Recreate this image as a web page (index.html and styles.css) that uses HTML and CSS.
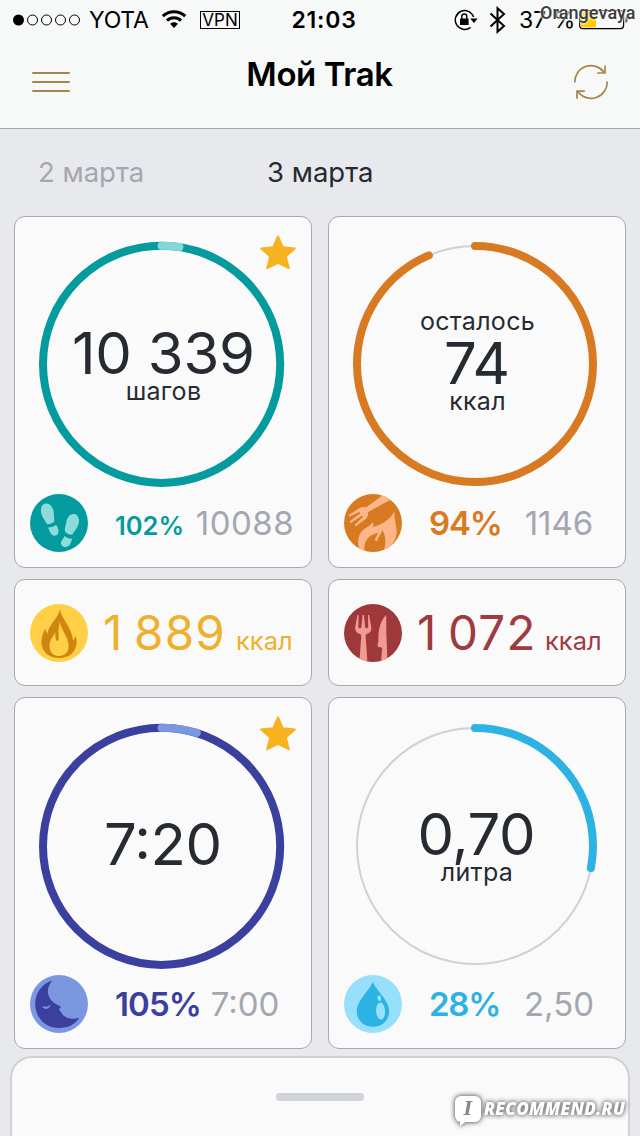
FILE: index.html
```html
<!DOCTYPE html>
<html lang="ru">
<head>
    <meta charset="UTF-8">
    <meta name="viewport" content="width=device-width, initial-scale=1.0">
    <title>Мой Trak</title>
    <link rel="stylesheet" href="styles.css">
</head>
<body>
    <header class="header">
        <div class="status">
            <div class="status-left">
                <svg class="signal" width="68" height="12" viewBox="0 0 68 12">
                    <circle cx="5.5" cy="6" r="5.5"/>
                    <g fill="none" stroke="#000" stroke-width="1">
                        <circle cx="19.5" cy="6" r="5"/>
                        <circle cx="33.5" cy="6" r="5"/>
                        <circle cx="47.5" cy="6" r="5"/>
                        <circle cx="61.5" cy="6" r="5"/>
                    </g>
                </svg>
                <span class="carrier">YOTA</span>
                <svg class="wifi" width="26" height="20" viewBox="0 0 26 20">
                    <g fill="none" stroke="#000" stroke-width="3">
                        <path d="M1.8 7.2C8 1.2 18 1.2 24.2 7.2"/>
                        <path d="M6 11.6C10 7.8 16 7.8 20 11.6"/>
                    </g>
                    <path d="M9 14.8C11.3 12.6 14.7 12.6 17 14.8L13 19Z"/>
                </svg>
                <span class="vpn">VPN</span>
            </div>
            <span class="clock">21:03</span>
            <div class="status-right">
                <svg class="lock" width="24" height="22" viewBox="0 0 24 22">
                    <path d="M19.6 8A9.4 9.4 0 1 0 16.5 18.4" fill="none" stroke="#000" stroke-width="1.4"/>
                    <path d="M16.2 9.5H23.6L20 14Z"/>
                    <rect x="6" y="9.5" width="8.6" height="6.5" rx=".6"/>
                    <path d="M7.8 10V7.6C7.8 4.2 12.8 4.2 12.8 7.6V10" fill="none" stroke="#000" stroke-width="1.4"/>
                </svg>
                <svg class="bluetooth" width="18" height="28" viewBox="0 0 18 28">
                    <path d="M1.5 7.5L15 20L8.5 25.8V2.2L15 8L1.5 20.5" fill="none" stroke="#000" stroke-width="2"/>
                </svg>
                <span class="charge">37 %</span>
                <svg class="battery" width="50" height="20" viewBox="0 0 50 20">
                    <rect x=".6" y=".6" width="44" height="18" rx="3" fill="none" stroke="#000" stroke-width="1.2"/>
                    <rect x="2" y="2" width="15" height="15.4" fill="#ffcc00"/>
                    <path d="M46.5 6.5C49.5 7 49.5 12.5 46.5 13Z" fill="#555"/>
                </svg>
            </div>
        </div>
        <div class="navbar">
            <button class="menu" aria-label="Меню"><i></i><i></i><i></i></button>
            <h1 class="title">Мой Trak</h1>
            <button class="refresh" aria-label="Обновить">
                <svg width="36" height="36" viewBox="0 0 36 36" fill="none" stroke="#a6854c" stroke-width="1.7">
                    <path d="M1.8 18.5A16.2 16.2 0 0 1 31 8.2"/>
                    <path d="M32 1.5V9H24.2"/>
                    <path d="M34.2 17.5A16.2 16.2 0 0 1 5 27.8"/>
                    <path d="M4 34.8V27.2H11.8"/>
                </svg>
            </button>
        </div>
    </header>

    <nav class="days">
        <span class="day">2 марта</span>
        <span class="day active">3 марта</span>
    </nav>

    <main class="cards">
        <section class="card steps">
            <svg class="ring" width="246" height="246" viewBox="0 0 246 246">
                <circle class="arc" cx="122.6" cy="123.3" r="118.6"/>
                <circle class="arc extra" cx="122.6" cy="123.3" r="118.6" pathLength="100" stroke-dasharray="2.4 100" transform="rotate(-90 122.6 123.3)"/>
                <text class="value" x="124.5" y="133" textLength="183">10 339</text>
                <text class="unit" x="124.5" y="159">шагов</text>
            </svg>
            <svg class="star" width="36" height="35" viewBox="0 0 36 35">
                <path d="M18 1.5L22.8 12.2L34.8 13.4L25.8 21.4L28.8 33.2L18 27.8L7.2 33.2L10.2 21.4L1.2 13.4L13.2 12.2Z"/>
            </svg>
            <div class="foot">
                <svg class="icon" viewBox="0 0 58 58">
                    <g fill="#8edcd9">
                        <path d="M11 17C10.8 12 13 9.3 16.5 9.5C20.8 9.7 24 14.5 23.8 20C23.7 23.5 24.6 25 24.2 27.5C22 29.8 19.5 30.6 16.8 30C15.5 26.5 11.2 23 11 17Z"/>
                        <path d="M17.8 33.5C20.8 33.7 23.5 32.8 26 30.8C28.4 34 29.8 38.8 27 41C24.4 42.8 21.3 41.4 20.3 38.6C19.6 36.6 18.6 35.4 17.8 33.5Z"/>
                        <path d="M49 27.5C49.2 22.5 46.8 19.8 43.4 20C39.4 20.2 36.8 24 36.2 28.5C35.8 32 34.4 34 35 37.5C37 40 39.8 41 42.4 40.7C43.8 37 48.7 33.5 49 27.5Z"/>
                        <path d="M42 44.8C39.2 44.6 36.6 43.8 34.6 42C33.6 44.5 31.5 45.8 31 48.4C30.6 51 32.8 53 35.6 53C40 52.8 41.2 48.4 42 44.8Z"/>
                    </g>
                </svg>
                <span class="percent">102%</span>
                <span class="target">10088</span>
            </div>
        </section>

        <section class="card balance">
            <svg class="ring" width="246" height="246" viewBox="0 0 246 246">
                <circle class="track" cx="122" cy="123" r="118"/>
                <circle class="arc" cx="122" cy="123" r="118" pathLength="100" stroke-dasharray="93.6 100" transform="rotate(-90 122 123)"/>
                <text class="unit" x="124.5" y="89">осталось</text>
                <text class="value" x="124" y="143" textLength="66">74</text>
                <text class="unit" x="124.5" y="169">ккал</text>
            </svg>
            <div class="foot">
                <svg class="icon" viewBox="0 0 58 58">
                    <g fill="#fdb68a">
                        <path d="M39 1L22 13.5C20 12.8 17.5 12.8 15.5 14L4.5 21.2L5.2 22.8L15.5 18L16.3 19.2L5.5 27.4L6.6 28.9L18.2 21.6L19 22.8L10.5 31L11.8 32.3L21.5 25.2C23.5 23.5 24.8 20.5 24 18L47 5.5Z"/>
                        <path d="M17 60C12.5 50 13.5 41 19 36C22.5 33 27 31.5 28.8 28C29.8 30 29.5 31.5 28.6 33C37 31 46 26 50.5 17.2C49.5 25 53.5 33 52.5 40C51.5 48 46 53 39 59C42 50 42.5 42.5 38.2 36C37.5 40 34.5 42 33.5 46.5C32.5 47.8 31 47.2 31 45.5C31.2 43.5 33.5 42 33.8 38.8C26 40.5 18 46.5 21 60Z"/>
                    </g>
                </svg>
                <span class="percent">94%</span>
                <span class="target">1146</span>
            </div>
        </section>

        <section class="card row burned">
            <svg class="icon" viewBox="0 0 58 58">
                <path fill="#cf8610" d="M30 5C30.5 14 42 23 43 36.2C44.6 35 45.2 33.5 45.3 31.5C47.3 36 47.4 42 44 47C40.5 52 35 54 29 54C22 54 15.8 51 12.9 45C10.5 39.5 11 32 15.5 24.5C15.8 26.5 16.2 28 17.5 29.5C19 20 28.5 14 30 5Z"/>
                <path fill="#ffcf45" d="M29.8 17C30.5 26 38.7 32 38.6 42.5C38.5 48.5 34.5 52 29 52C23 52 19.5 48 19.5 42C19.5 35 24 32.5 25.5 28C25.3 32 25.2 37 27.5 37C30 35.5 28.2 31 28.4 27C28.6 23 29.8 20.5 29.8 17Z"/>
            </svg>
            <span class="amount">1 889</span>
            <span class="kcal">ккал</span>
        </section>

        <section class="card row eaten">
            <svg class="icon" viewBox="0 0 58 58">
                <g fill="#f09a92">
                    <path d="M13.4 11L11.2 23.5C10.8 27.5 13.5 29.2 16.2 30C17.4 31 17.3 32 17.2 33L15.4 58H23.4L21.7 33C21.6 31.5 21.7 30.7 22.7 30C25.5 29 27.8 27.5 27.3 23.5L25.2 11H24L24.2 23C24 24.8 21.5 24.8 21.2 23L20 11H18.6L17.3 23C17 24.8 14.6 24.8 14.4 23L14.6 11Z"/>
                    <path d="M42.2 11C37 15.5 33.7 26 34.5 37C33.8 38.5 33.5 40 33.6 42.2C34.6 43.8 36.6 43.2 38.2 43.8L37 58H43.4L42.4 30Z"/>
                </g>
            </svg>
            <span class="amount">1 072</span>
            <span class="kcal">ккал</span>
        </section>

        <section class="card sleep">
            <svg class="ring" width="246" height="246" viewBox="0 0 246 246">
                <circle class="arc" cx="122.6" cy="124.3" r="118.6"/>
                <circle class="arc extra" cx="122.6" cy="124.3" r="118.6" pathLength="100" stroke-dasharray="4.8 100" transform="rotate(-90 122.6 124.3)"/>
                <text class="value" x="124" y="143" textLength="118">7:20</text>
            </svg>
            <svg class="star" width="36" height="35" viewBox="0 0 36 35">
                <path d="M18 1.5L22.8 12.2L34.8 13.4L25.8 21.4L28.8 33.2L18 27.8L7.2 33.2L10.2 21.4L1.2 13.4L13.2 12.2Z"/>
            </svg>
            <div class="foot">
                <svg class="icon" viewBox="0 0 58 58">
                    <path fill="#3b409f" d="M22.3 5.4C11.5 8.5 5 18.5 5.2 29.5C5.5 43 15.5 53 29 53C38.5 53 45.5 49 49.5 42.5C45 44.5 39 44.3 35.5 41.8C33.5 40.4 32.3 40.2 32 38.5C31.8 37.5 31 37 30 36.8L30.2 35.5L28.4 34.2C30 33.8 31.3 33 30.6 31.5C28.8 30.3 26 29.5 23.5 27.5C17 22 15.5 13.5 22.3 5.4Z"/>
                    <path fill="#7b97df" d="M12 31.3C15 32.3 18 31.8 20.8 29.2C20 33 15.5 36.4 12 31.3Z"/>
                </svg>
                <span class="percent">105%</span>
                <span class="target">7:00</span>
            </div>
        </section>

        <section class="card water">
            <svg class="ring" width="246" height="246" viewBox="0 0 246 246">
                <circle class="track" cx="122" cy="124" r="118"/>
                <circle class="arc" cx="122" cy="124" r="118" pathLength="100" stroke-dasharray="28 100" transform="rotate(-90 122 124)"/>
                <text class="value" x="123.5" y="133" textLength="118">0,70</text>
                <text class="unit" x="124" y="159">литра</text>
            </svg>
            <div class="foot">
                <svg class="icon" viewBox="0 0 58 58">
                    <path fill="#2cb2e3" d="M28.8 6.5C31 14.5 45.2 25 45.2 36C45.2 45.5 38 51.8 29 51.8C20 51.8 12.8 45.5 12.8 36C12.8 25 26.5 14.5 28.8 6.5Z"/>
                    <g fill="#97e0fb">
                        <ellipse cx="35.3" cy="23.2" rx="1.8" ry="2.9" transform="rotate(-15 35.3 23.2)"/>
                        <ellipse cx="36.6" cy="36" rx="4.5" ry="8.6" transform="rotate(-3 36.6 36)"/>
                    </g>
                </svg>
                <span class="percent">28%</span>
                <span class="target">2,50</span>
            </div>
        </section>
    </main>

    <div class="sheet"><div class="handle"></div></div>

    <span class="nick">Orangevaya</span>
    <div class="site">
        <span class="bubble">I</span><span class="site-name">RECOMMEND.RU</span>
    </div>
</body>
</html>
```
FILE: styles.css
```css
* {
    margin: 0;
    padding: 0;
    box-sizing: border-box;
}

body {
    position: relative;
    width: 640px;
    height: 1136px;
    overflow: hidden;
    background: #e8e9ec;
    color: #262a31;
    font-family: Inter, "Liberation Sans", sans-serif;
    white-space: nowrap;
}

button {
    border: none;
    background: none;
}

/* header */
.header {
    height: 129px;
    background: #f7f8f8;
    border-bottom: 1px solid #a5a6aa;
    color: #000;
}

.status {
    display: grid;
    grid-template-columns: 276px 70px 268px;
    align-items: center;
    height: 40px;
    padding-left: 13px;
}

.status-left {
    display: flex;
    align-items: center;
}

.carrier {
    margin-left: 8px;
    width: 60px;
    font-size: 23px;
    letter-spacing: -0.2px;
}

.wifi {
    margin-left: 12px;
    margin-top: -2px;
}

.vpn {
    margin-left: 13px;
    width: 40px;
    height: 18px;
    border: 1px solid #000;
    font-size: 17px;
    line-height: 16px;
    text-align: center;
}

.clock {
    font-size: 23px;
    font-weight: 600;
    letter-spacing: 0.8px;
    text-align: center;
}

.status-right {
    display: flex;
    align-items: center;
    padding-left: 95px;
}

.lock,
.bluetooth,
.battery {
    flex: none;
}

.bluetooth {
    margin-left: 11px;
}

.charge {
    flex: none;
    margin-left: 12px;
    width: 54px;
    font-size: 23px;
}

.battery {
    margin-left: 6px;
}

.navbar {
    display: flex;
    justify-content: space-between;
    padding: 0 31px 0 32px;
}

.menu {
    display: flex;
    flex-direction: column;
    gap: 7px;
    width: 38px;
    padding-top: 32px;
}

.menu i {
    height: 2px;
    border-radius: 1px;
    background: #a6854c;
}

.title {
    padding: 14px 4px 0 0;
    font-size: 33px;
    font-weight: 600;
    line-height: 40px;
    letter-spacing: -0.4px;
}

.refresh {
    padding-top: 24px;
}

/* day switch */
.days {
    display: flex;
    gap: 124px;
    height: 87px;
    padding: 24px 38px 0;
    font-size: 27.5px;
    line-height: 38px;
}

.day {
    width: 105px;
    color: #a4a7b2;
}

.day.active {
    color: #262a31;
}

/* cards */
.cards {
    display: grid;
    grid-template-columns: 298px 298px;
    grid-template-rows: 352px 107px 352px;
    gap: 11px 16px;
    padding: 0 14px;
}

.card {
    position: relative;
    padding: 24px 15px 0 24px;
    border: 1px solid #a7a8b4;
    border-radius: 11px;
    background: #fafafa;
}

.ring {
    display: block;
    overflow: visible;
}

.arc,
.track {
    fill: none;
    stroke-width: 8;
    stroke-linecap: round;
}

.track {
    stroke: #cfd1d5;
    stroke-width: 2;
}

.value,
.unit {
    fill: #262a31;
    text-anchor: middle;
}

.value {
    font-size: 58px;
}

.unit {
    font-size: 25px;
    letter-spacing: 0.3px;
}

.star {
    position: absolute;
    top: 18px;
    left: 245px;
    fill: #f7b21f;
    stroke: #f7b21f;
    stroke-width: 2;
    stroke-linejoin: round;
}

.foot {
    display: grid;
    grid-template-columns: 85px 81px 98px;
    align-items: baseline;
    height: 58px;
    margin: 7px 0 0 -9px;
    line-height: 58px;
}

.icon {
    display: block;
    width: 58px;
    height: 58px;
    border-radius: 50%;
}

.foot .icon {
    align-self: start;
}

.percent {
    font-size: 33px;
    font-weight: 600;
    letter-spacing: -1.2px;
}

.target {
    justify-self: center;
    color: #a4a7b0;
    font-size: 33px;
}

.row {
    display: flex;
    align-items: baseline;
    padding: 24px 0 0 15px;
    line-height: 58px;
}

.row .icon {
    align-self: flex-start;
}

.amount {
    margin-left: 15px;
    width: 133px;
    font-size: 47.5px;
    letter-spacing: 1.2px;
    word-spacing: -4px;
}

.kcal {
    font-size: 25.5px;
}

.steps .arc { stroke: #049b9f; }
.steps .extra { stroke: #82d8d8; }
.steps .icon { background: #049b9f; }
.steps .percent { color: #049b9f; font-size: 25.5px; letter-spacing: 0; }
.steps .target { letter-spacing: 0.5px; }

.balance .arc { stroke: #d77a22; }
.balance .icon { background: #d77a22; }
.balance .percent { color: #d77a22; }

.burned .icon { background: #ffcf45; }
.burned { color: #efb02d; }

.eaten .icon { background: #9f383a; }
.eaten { color: #9f3b40; }
.eaten .amount { width: 128px; }

.sleep .arc { stroke: #3b409f; }
.sleep .extra { stroke: #7b97df; }
.sleep .icon { background: #7b97df; }
.sleep .percent { color: #3b409f; letter-spacing: -0.9px; }

.water .arc { stroke: #2cb2e3; }
.water .icon { background: #97e0fb; }
.water .percent { color: #2cb2e3; }

/* bottom sheet */
.sheet {
    height: 110px;
    margin: 7px 10px 0;
    padding-top: 35px;
    border: 2px solid #cfd1d4;
    border-radius: 22px;
    background: #fafafa;
}

.handle {
    width: 88px;
    height: 8px;
    margin: 0 auto;
    border-radius: 4px;
    background: #cfd2d6;
}

/* photo captions over the page */
.nick {
    position: absolute;
    top: 2px;
    left: 540px;
    color: #3c3c3c;
    font: 500 18px/21px Roboto, sans-serif;
    letter-spacing: 0.1px;
    text-shadow: 0 0 3px #fff, 0 0 3px #fff;
}

.site {
    position: absolute;
    top: 1096px;
    left: 455px;
    display: flex;
    align-items: center;
    gap: 3px;
    color: #fff;
    font: italic 800 17px/26px "Open Sans", sans-serif;
    letter-spacing: 0.3px;
    filter: drop-shadow(0 0 2px #777) drop-shadow(0 0 2px #999);
}

.bubble {
    position: relative;
    width: 26px;
    height: 26px;
    border-radius: 6px;
    background: #fff;
    color: #888;
    font: italic 700 18px/26px "DejaVu Serif", serif;
    text-align: center;
}

.bubble::after {
    content: "";
    position: absolute;
    left: 5px;
    bottom: -4px;
    border-top: 5px solid #fff;
    border-right: 7px solid transparent;
}
```
